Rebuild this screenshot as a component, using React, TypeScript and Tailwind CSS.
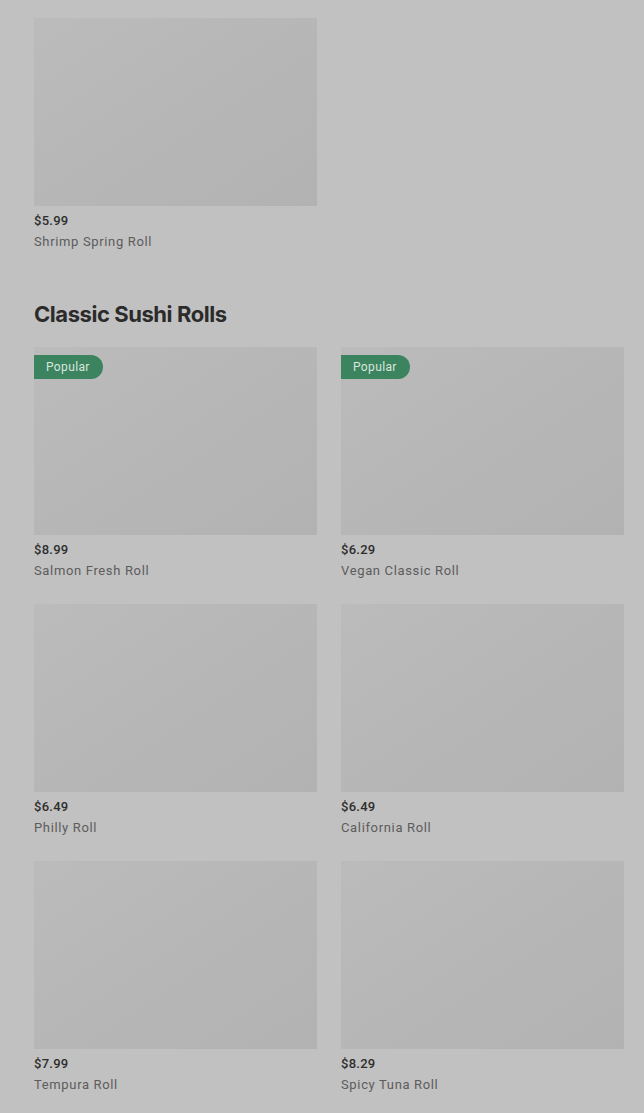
const popularRolls = [
  { price: "$5.99", name: "Shrimp Spring Roll" },
];

const classicRolls = [
  { price: "$8.99", name: "Salmon Fresh Roll", popular: true },
  { price: "$6.29", name: "Vegan Classic Roll", popular: true },
  { price: "$6.49", name: "Philly Roll" },
  { price: "$6.49", name: "California Roll" },
  { price: "$7.99", name: "Tempura Roll" },
  { price: "$8.29", name: "Spicy Tuna Roll" },
];

function MenuCard({ price, name, popular }: { price: string; name: string; popular?: boolean }) {
  return (
    <div className="flex flex-col">
      <div className="relative h-[188px] w-full bg-gradient-to-br from-[#bbbbbb] to-[#b2b2b2]">
        {popular && (
          <span className="absolute left-0 top-2 flex h-6 items-center rounded-r-full bg-[#3c8460] pl-3 pr-[13px] text-[12px] tracking-[0.03em] text-[#d9e6dd]">
            Popular
          </span>
        )}
      </div>
      <p className="mt-[7px] text-[13px] font-medium leading-4 tracking-[0.02em] text-[#2e2e2e]">{price}</p>
      <p className="mt-[5px] text-[13px] leading-4 tracking-[0.05em] text-[#5c5c5c]">{name}</p>
    </div>
  );
}

export default function App() {
  return (
    <div
      className="min-h-[1113px] w-full overflow-hidden bg-[#c1c1c1] pl-[34px] pt-[18px]"
      style={{ fontFamily: "Roboto, 'Liberation Sans', sans-serif" }}
    >
      <div className="grid w-[590px] grid-cols-2 gap-x-6 gap-y-[25px]">
        {popularRolls.map((r) => (
          <MenuCard key={r.name} {...r} />
        ))}
      </div>

      <h2
        className="mb-[19px] mt-[50px] text-[22px] font-bold leading-7 tracking-[-0.02em] text-[#2b2b2b]"
        style={{ fontFamily: "Inter, 'Liberation Sans', sans-serif" }}
      >
        Classic Sushi Rolls
      </h2>

      <div className="grid w-[590px] grid-cols-2 gap-x-6 gap-y-[25px]">
        {classicRolls.map((r) => (
          <MenuCard key={r.name} {...r} />
        ))}
      </div>
    </div>
  );
}
